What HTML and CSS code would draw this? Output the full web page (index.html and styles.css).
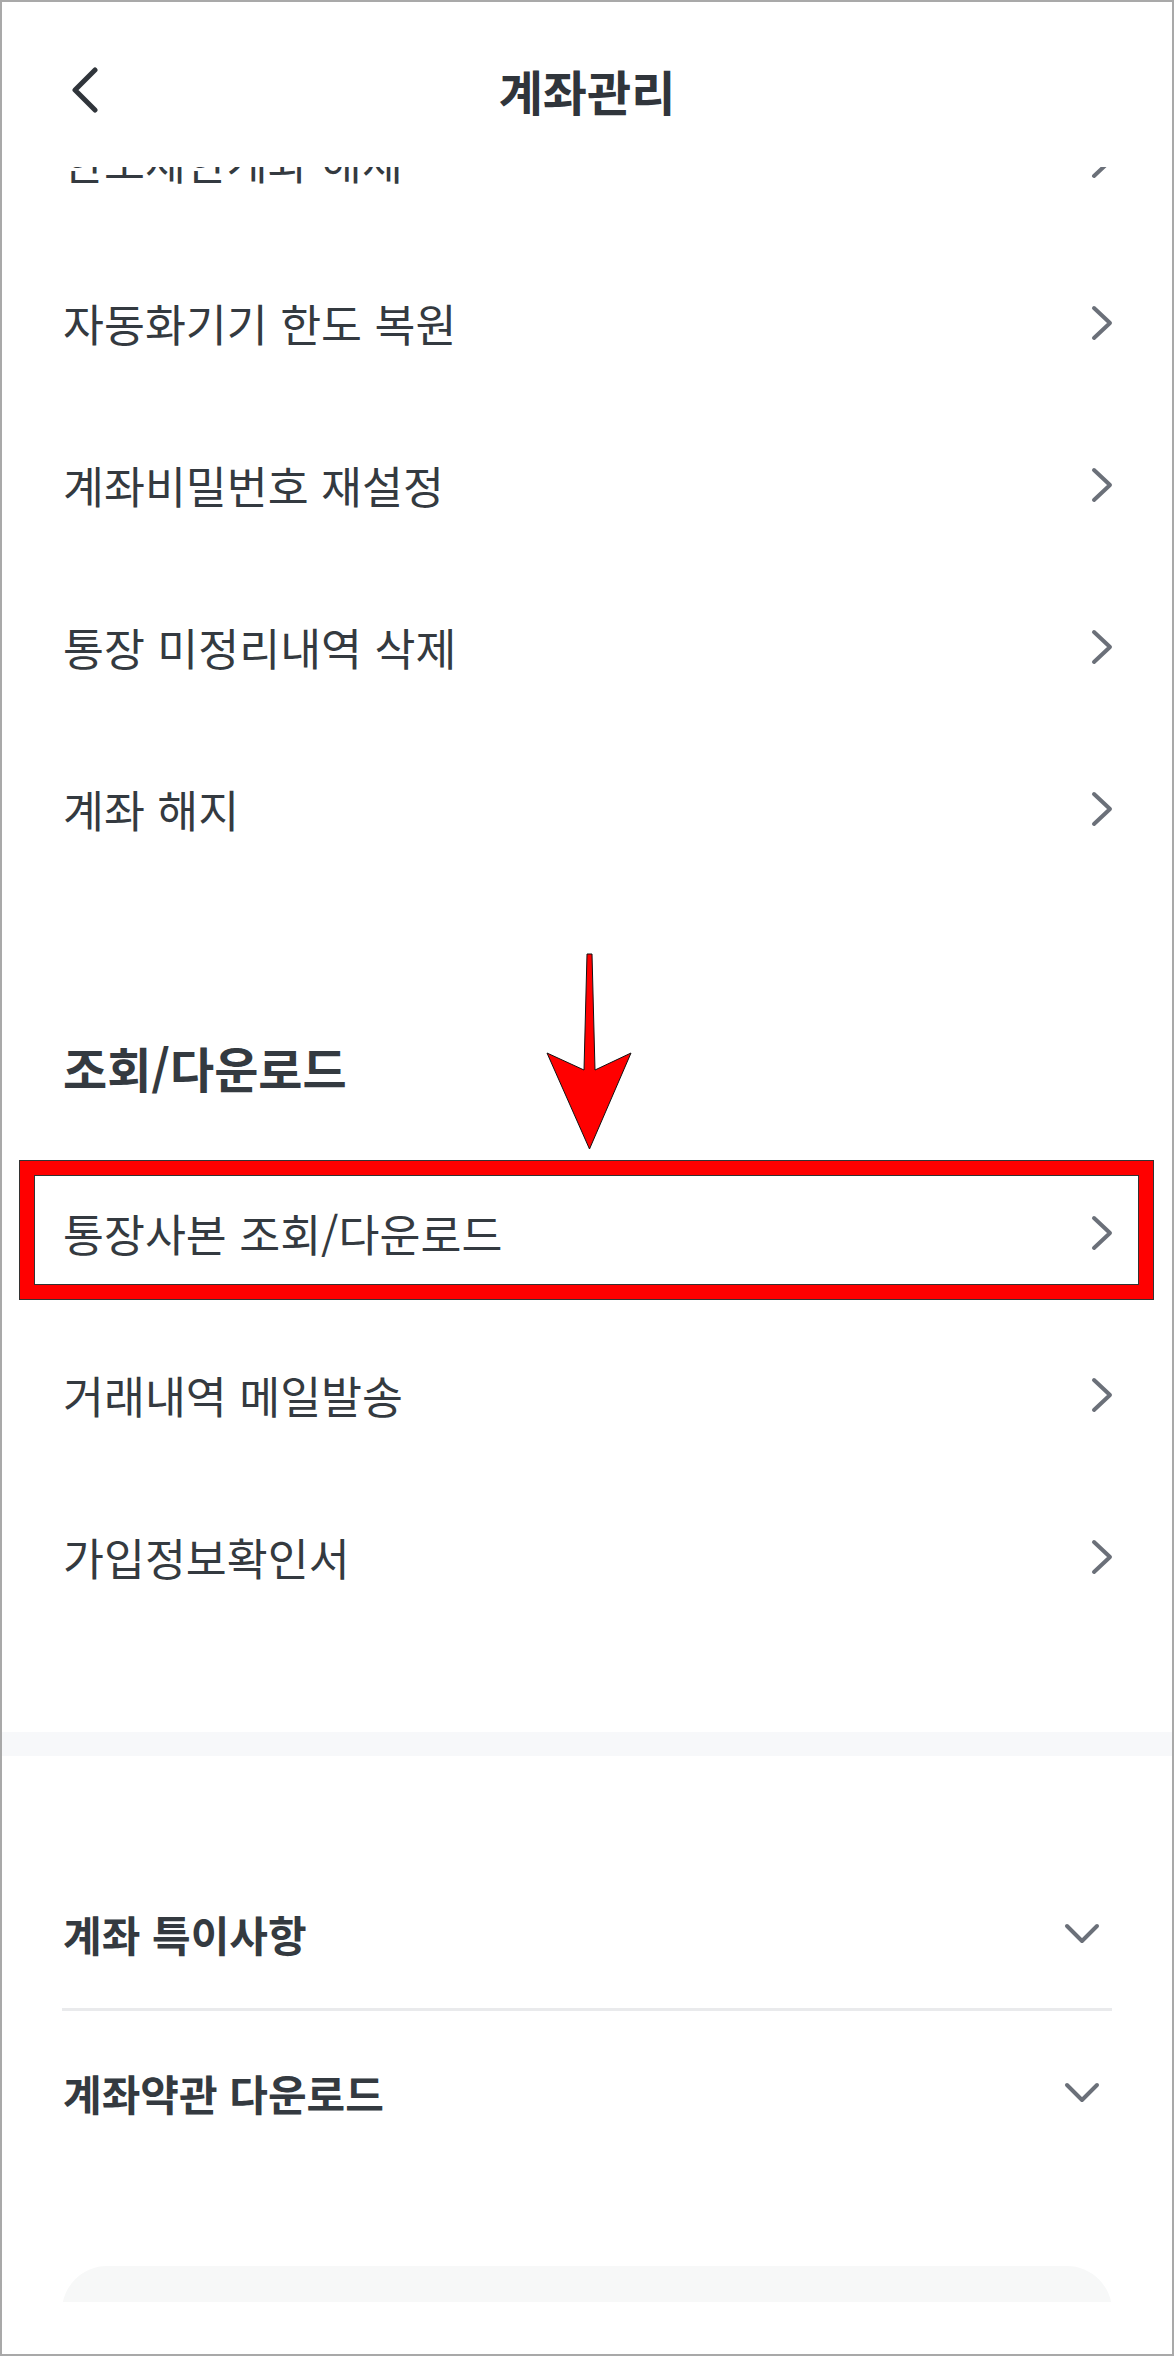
FILE: index.html
```html
<!DOCTYPE html>
<html lang="ko">
<head>
<meta charset="utf-8">
<title>계좌관리</title>
<link rel="stylesheet" href="styles.css">
</head>
<body>
<div class="frame">
  <header class="header">
    <div class="bar">
      <button class="back" aria-label="뒤로">
        <svg width="30" height="46" viewBox="0 0 30 46"><path d="M25 3 L5 23 L25 43" fill="none" stroke="#30353b" stroke-width="5" stroke-linecap="round" stroke-linejoin="round"/></svg>
      </button>
      <h1 class="title">계좌관리</h1>
      <span></span>
    </div>
  </header>

  <main class="scroll">
    <div class="content">
      <ul class="list">
        <li class="item"><span>한도제한계좌 해제</span><svg class="chev" width="24" height="38" viewBox="0 0 24 38"><path d="M4 4 L20 19 L4 34" /></svg></li>
        <li class="item"><span>자동화기기 한도 복원</span><svg class="chev" width="24" height="38" viewBox="0 0 24 38"><path d="M4 4 L20 19 L4 34" /></svg></li>
        <li class="item"><span>계좌비밀번호 재설정</span><svg class="chev" width="24" height="38" viewBox="0 0 24 38"><path d="M4 4 L20 19 L4 34" /></svg></li>
        <li class="item"><span>통장 미정리내역 삭제</span><svg class="chev" width="24" height="38" viewBox="0 0 24 38"><path d="M4 4 L20 19 L4 34" /></svg></li>
        <li class="item"><span>계좌 해지</span><svg class="chev" width="24" height="38" viewBox="0 0 24 38"><path d="M4 4 L20 19 L4 34" /></svg></li>
      </ul>

      <section class="group">
        <h2 class="group-title">조회/다운로드</h2>
        <svg class="arrow" width="88" height="198" viewBox="0 0 88 198"><polygon points="42,1 47,1 50,117 86,100 44.5,196 2,100 39,117" fill="#ff0000" stroke="#111" stroke-width="1" stroke-linejoin="miter"/></svg>
        <ul class="list">
          <li class="item highlighted"><span>통장사본 조회/다운로드</span><svg class="chev" width="24" height="38" viewBox="0 0 24 38"><path d="M4 4 L20 19 L4 34" /></svg><div class="redbox"></div></li>
          <li class="item"><span>거래내역 메일발송</span><svg class="chev" width="24" height="38" viewBox="0 0 24 38"><path d="M4 4 L20 19 L4 34" /></svg></li>
          <li class="item"><span>가입정보확인서</span><svg class="chev" width="24" height="38" viewBox="0 0 24 38"><path d="M4 4 L20 19 L4 34" /></svg></li>
        </ul>
      </section>

      <div class="band"></div>

      <section class="acc">
        <div class="acc-row"><span>계좌 특이사항</span><svg class="down" width="38" height="24" viewBox="0 0 38 24"><path d="M4 4 L19 19 L34 4" /></svg></div>
        <div class="acc-row second"><span>계좌약관 다운로드</span><svg class="down" width="38" height="24" viewBox="0 0 38 24"><path d="M4 4 L19 19 L34 4" /></svg></div>
      </section>

      <div class="card"></div>
    </div>
  </main>

  <footer class="footer"></footer>
</div>
</body>
</html>
```

FILE: styles.css
```css
* { box-sizing: border-box; }
html, body { margin: 0; padding: 0; background: #fff; }
body {
  font-family: "Noto Sans CJK KR", "Noto Sans", sans-serif;
  color: #343a40;
}
.frame {
  width: 1174px;
  height: 2356px;
  border: 2px solid #a9a9a9;
  background: #fff;
  display: flex;
  flex-direction: column;
  overflow: hidden;
}
.header {
  flex: none;
  height: 165px;
  padding-top: 60px;
  background: #fff;
}
.bar {
  height: 56px;
  display: grid;
  grid-template-columns: 1fr auto 1fr;
  align-items: center;
}
.back {
  justify-self: start;
  margin-left: 68px;
  padding: 0;
  border: 0;
  background: none;
  width: 30px;
  height: 46px;
  display: flex;
}
.title {
  margin: 0;
  font-size: 48px;
  font-weight: 700;
  letter-spacing: 0;
  line-height: 56px;
  color: #30353b;
}
.scroll {
  flex: 1;
  overflow: hidden;
}
.content {
  margin-top: -87px;
}
.list {
  list-style: none;
  margin: 0;
  padding: 0;
}
.item {
  position: relative;
  height: 162px;
  padding: 0 58px 0 61px;
  display: flex;
  align-items: center;
  justify-content: space-between;
  font-size: 44.5px;
  letter-spacing: 0;
  line-height: 1.2;
  color: #343a40;
}
.chev path, .down path {
  fill: none;
  stroke: #6b7079;
  stroke-width: 4;
  stroke-linecap: round;
  stroke-linejoin: round;
}
.group {
  position: relative;
}
.group-title {
  margin: 0;
  padding: 147px 61px 55px;
  font-size: 48px;
  font-weight: 700;
  letter-spacing: 0;
  line-height: 60px;
  color: #343a40;
}
.arrow {
  position: absolute;
  left: 543px;
  top: 63px;
}
.redbox {
  position: absolute;
  left: 18px;
  top: 9px;
  width: 1133px;
  height: 138px;
  border: 14px solid #ff0000;
  box-shadow: 0 0 0 1px #333, inset 0 0 0 1px #333;
  pointer-events: none;
}
.band {
  margin-top: 94px;
  height: 24px;
  background: #f7f8fa;
}
.acc {
  padding: 104px 60px 0;
}
.acc-row {
  height: 151px;
  display: flex;
  align-items: center;
  justify-content: space-between;
  padding-right: 11px;
  font-size: 42px;
  font-weight: 700;
  letter-spacing: 0;
  line-height: 1.2;
  border-bottom: 3px solid #e9eaec;
  padding-left: 1px;
}
.acc-row.second {
  height: 148px;
  margin-top: 8px;
  border-bottom: 0;
}
.card {
  margin: 99px 60px 0;
  height: 200px;
  border-radius: 45px 45px 0 0;
  background: #f7f8f8;
}
.footer {
  flex: none;
  height: 52px;
  background: #fff;
}
```
